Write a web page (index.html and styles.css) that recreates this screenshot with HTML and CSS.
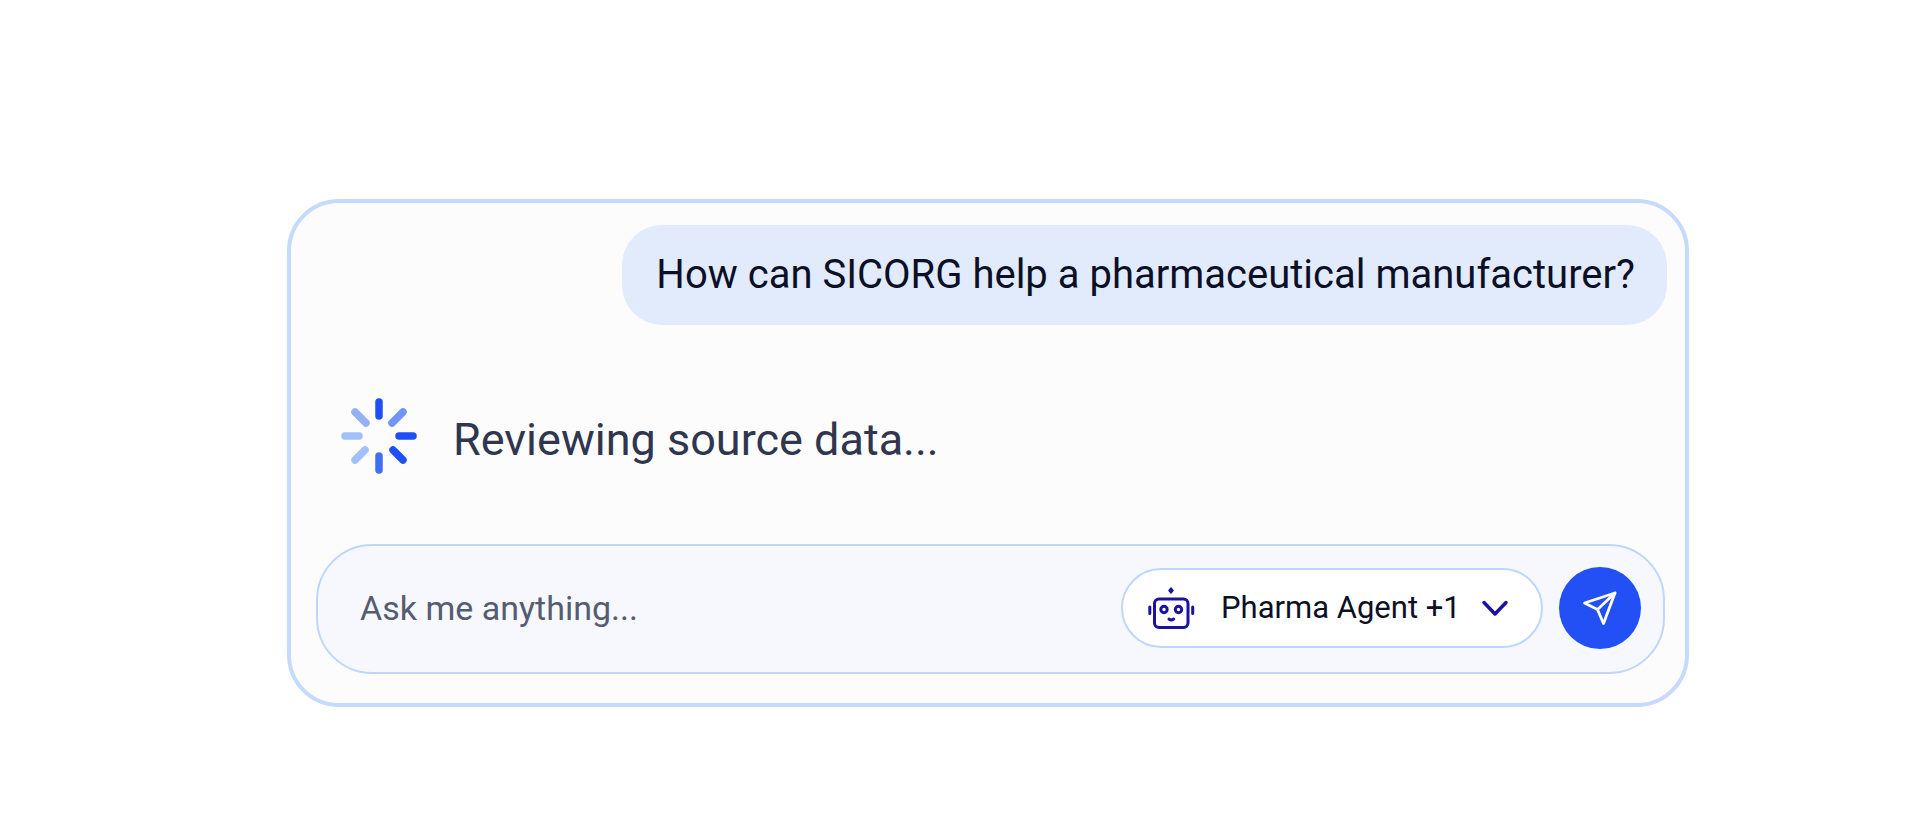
FILE: index.html
```
<!DOCTYPE html>
<html lang="en">

<head>
    <meta charset="UTF-8">
    <meta name="viewport" content="width=device-width, initial-scale=1.0">
    <title>SICORG Assistant</title>
    <link rel="stylesheet" href="styles.css">
</head>

<body>
    <main class="chat">
        <p class="question">How can SICORG help a pharmaceutical manufacturer?</p>

        <div class="status" role="status">
            <svg class="spinner" viewBox="0 0 76 76" fill="none" stroke="#1f50f5" stroke-width="7.5" stroke-linecap="round" aria-hidden="true">
                <path d="M38 4v14" />
                <path d="M62 14L51 25" stroke="#6f95f8" />
                <path d="M72 38H58" />
                <path d="M62 62L52 52" />
                <path d="M38 72V58" stroke="#3f6ff8" />
                <path d="M14 62L24 52" stroke="#a3bffa" />
                <path d="M4 38H18" stroke="#a3bffa" />
                <path d="M14 14L25 25" stroke="#94b1f6" />
            </svg>
            <span class="status-text">Reviewing source data...</span>
        </div>

        <form class="composer" onsubmit="event.preventDefault()">
            <input class="message" type="text" name="message" placeholder="Ask me anything..." aria-label="Message">
            <label class="agent" for="agent">
                <svg class="robot" viewBox="0 0 48 48" fill="none" stroke="#1a12a0" stroke-width="3" stroke-linecap="round" stroke-linejoin="round" aria-hidden="true">
                    <path d="M24 4l2 2.500-2 2.500-2-2.500z" fill="#1a12a0" stroke-width="1.5" />
                    <rect x="7.5" y="15" width="33.500" height="28.500" rx="4.5" />
                    <path d="M2.800 23v6.500M45.700 23v6.500" />
                    <circle cx="17" cy="25.500" r="3.200" />
                    <circle cx="31.500" cy="25.500" r="3.200" />
                    <path d="M22 35q2.300 2 4.600 0" />
                </svg>
                <select class="agent-select" id="agent" name="agent" aria-label="Agent">
                    <option>Pharma Agent +1</option>
                </select>
                <svg class="chevron" viewBox="0 0 28 18" fill="none" stroke="#1a12a0" stroke-width="3.5" stroke-linecap="round" stroke-linejoin="round" aria-hidden="true">
                    <path d="M3 3.500l11 11.500L25 3.500" />
                </svg>
            </label>
            <button class="send" type="submit" aria-label="Send">
                <svg class="plane" viewBox="0 0 36 36" fill="none" stroke="#fff" stroke-width="2.800" stroke-linecap="round" stroke-linejoin="round" aria-hidden="true">
                    <path d="M33 3L2.500 13l13 6.500L21.500 33.500z" />
                    <path d="M33 3L15.500 19.500" />
                </svg>
            </button>
        </form>
    </main>
</body>

</html>
```
FILE: styles.css
```
* {
    box-sizing: border-box;
    margin: 0;
    padding: 0;
}

body {
    padding: 199px 226px 112px 287px;
    background-color: #fff;
    color: #0b1026;
    font-family: Roboto, "Liberation Sans", sans-serif;
}

.chat {
    display: flex;
    flex-direction: column;
    padding: 22px 18px 29px 25px;
    border: 4px solid #c5dafc;
    border-radius: 52px;
    background-color: #fcfcfd;
}

.question {
    align-self: flex-end;
    padding: 24px 32px 24px 34px;
    border-radius: 40px;
    background-color: #e2ebfc;
    font-size: 40px;
    line-height: 52px;
}

.status {
    display: flex;
    align-items: flex-end;
    gap: 36px;
    margin: 73px 0 70px;
    padding-left: 25px;
}

.spinner {
    width: 76px;
    height: 76px;
}

.status-text {
    color: #30364d;
    font-size: 45px;
    line-height: 68px;
}

.composer {
    display: flex;
    align-items: center;
    gap: 16px;
    height: 130px;
    margin-right: 2px;
    padding: 0 22px 2px 42px;
    border: 2px solid #bfd6fc;
    border-radius: 56px;
    background-color: #f6f8fe;
}

.message {
    flex: 1;
    min-width: 0;
    border: none;
    outline: none;
    background: none;
    color: #0b1026;
    font-family: inherit;
    font-size: 34px;
    line-height: 44px;
}

.message::placeholder {
    color: #555c70;
    opacity: 1;
}

.agent {
    display: flex;
    align-items: center;
    height: 80px;
    padding: 0 32px 0 24px;
    border: 2px solid #bfd6fc;
    border-radius: 40px;
    background-color: #fff;
    cursor: pointer;
}

.robot {
    width: 48px;
    height: 48px;
    margin-right: 26px;
}

.agent-select {
    appearance: none;
    border: none;
    outline: none;
    background: none;
    color: #0b1026;
    font-family: inherit;
    font-size: 31px;
    line-height: 40px;
    cursor: pointer;
}

.chevron {
    width: 28px;
    height: 18px;
    margin-left: 20px;
}

.send {
    display: flex;
    align-items: center;
    justify-content: center;
    width: 82px;
    height: 82px;
    border: none;
    border-radius: 50%;
    background-color: #2350f5;
    cursor: pointer;
}

.plane {
    width: 36px;
    height: 36px;
}
```
